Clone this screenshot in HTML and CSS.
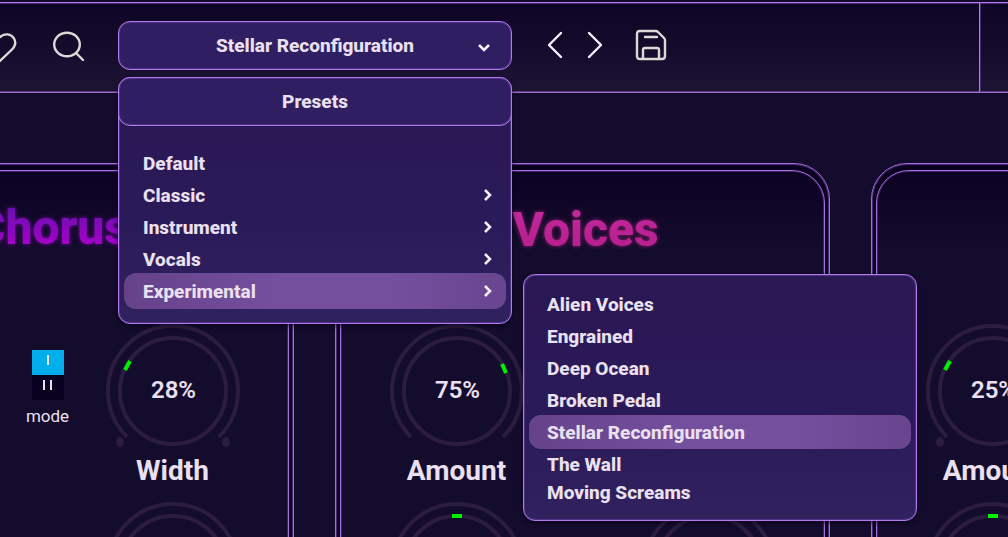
FILE: index.html
```html
<!DOCTYPE html>
<html lang="en">
<head>
    <meta charset="UTF-8">
    <meta name="viewport" content="width=device-width, initial-scale=1.0">
    <title>Vocal Effects</title>
    <link rel="stylesheet" href="styles.css">
</head>
<body>
    <!-- shared icons -->
    <svg class="sprite" aria-hidden="true">
        <symbol id="dial" viewBox="0 0 134 134">
            <path d="M21 113 A65 65 0 1 1 113 113" />
            <circle cx="67" cy="67" r="53" />
        </symbol>
        <symbol id="chevron" viewBox="0 0 8 12">
            <path d="M1 1 L6 6 L1 11" />
        </symbol>
    </svg>

    <header class="toolbar">
        <div class="tools">
            <button class="icon-btn heart" aria-label="Favourites">
                <svg width="32" height="32" viewBox="0 0 32 32"><path d="M16 32 L28 20.5 C31.5 17 32 13 30 9.5 C27 4.5 20.5 4 16 8 C11.5 4 5 4.5 2 9.5 C0 13 0.5 17 4 20.5 Z" /></svg>
            </button>
            <button class="icon-btn search" aria-label="Search">
                <svg width="32" height="32" viewBox="0 0 32 32"><ellipse cx="14" cy="15.5" rx="12.8" ry="11.8" /><path d="M23 24 L30 31" /></svg>
            </button>

            <div class="preset">
                <select class="preset-select" aria-label="Preset">
                    <option>Stellar Reconfiguration</option>
                    <option>Default</option>
                </select>
                <svg class="preset-arrow" width="12" height="8" viewBox="0 0 12 8"><path d="M1 1 L6 6 L11 1" /></svg>

                <div class="menu">
                    <h2>Presets</h2>
                    <ul>
                        <li><button>Default</button></li>
                        <li><button>Classic <svg><use href="#chevron" /></svg></button></li>
                        <li><button>Instrument <svg><use href="#chevron" /></svg></button></li>
                        <li><button>Vocals <svg><use href="#chevron" /></svg></button></li>
                        <li><button class="active">Experimental <svg><use href="#chevron" /></svg></button></li>
                    </ul>
                </div>

                <div class="menu submenu">
                    <ul>
                        <li><button>Alien Voices</button></li>
                        <li><button>Engrained</button></li>
                        <li><button>Deep Ocean</button></li>
                        <li><button>Broken Pedal</button></li>
                        <li><button class="active">Stellar Reconfiguration</button></li>
                        <li><button>The Wall</button></li>
                        <li><button>Moving Screams</button></li>
                    </ul>
                </div>
            </div>

            <div class="nav">
                <button class="icon-btn bright" aria-label="Previous preset">
                    <svg width="16" height="26" viewBox="0 0 16 26"><path d="M14 1 L2 13 L14 25" /></svg>
                </button>
                <button class="icon-btn bright" aria-label="Next preset">
                    <svg width="16" height="26" viewBox="0 0 16 26"><path d="M2 1 L14 13 L2 25" /></svg>
                </button>
            </div>
            <button class="icon-btn" aria-label="Save">
                <svg width="32" height="32" viewBox="0 0 32 32"><path d="M5 2 H21 Q22 2 23 3 L29 9 Q30 10 30 11 V27 Q30 30 27 30 H5 Q2 30 2 27 V5 Q2 2 5 2 Z M8 30 V21 Q8 19 10 19 H22 Q24 19 24 21 V30 M10 8 H22" /></svg>
            </button>
        </div>
        <div class="extra"></div>
    </header>

    <main class="panels">
        <section class="panel">
            <div class="panel-inner">
                <h1 class="chorus">Chorus</h1>
                <div class="knobs">
                    <div class="knob">
                        <svg class="dial"><use href="#dial" /></svg>
                        <span class="value">50%</span>
                        <h3>Rate</h3>
                    </div>
                    <div class="knob">
                        <svg class="dial">
                            <use href="#dial" />
                            <path class="mark" d="M19 46 L24 37" />
                            <ellipse class="stop" cx="14" cy="118" rx="4" ry="5" />
                            <ellipse class="stop" cx="120" cy="118" rx="4" ry="5" />
                        </svg>
                        <span class="value">28%</span>
                        <h3>Width</h3>
                    </div>
                    <div class="mode">
                        <div class="mode-switch">
                            <button class="on" aria-label="Mode 1"><i></i></button>
                            <button aria-label="Mode 2"><i></i><i></i></button>
                        </div>
                        <span>mode</span>
                    </div>
                    <div class="knob">
                        <svg class="dial"><use href="#dial" /></svg>
                    </div>
                    <div class="knob">
                        <svg class="dial"><use href="#dial" /></svg>
                    </div>
                </div>
            </div>
        </section>

        <section class="panel">
            <div class="panel-inner">
                <h1 class="voices">Voices</h1>
                <div class="knobs">
                    <div class="knob">
                        <svg class="dial"><use href="#dial" /><path class="mark" d="M112 40 L116 49" /></svg>
                        <span class="value">75%</span>
                        <h3>Amount</h3>
                    </div>
                    <div class="knob">
                        <svg class="dial"><use href="#dial" /></svg>
                        <h3>Spread</h3>
                    </div>
                    <div class="knob">
                        <svg class="dial"><use href="#dial" /><path class="mark" d="M62 14 H72" /></svg>
                    </div>
                    <div class="knob">
                        <svg class="dial"><use href="#dial" /></svg>
                    </div>
                </div>
            </div>
        </section>

        <section class="panel">
            <div class="panel-inner">
                <h1 class="voices">Delay</h1>
                <div class="knobs">
                    <div class="knob">
                        <svg class="dial">
                            <use href="#dial" />
                            <path class="mark" d="M19 46 L24 37" />
                            <ellipse class="stop" cx="14" cy="118" rx="4" ry="5" />
                            <ellipse class="stop" cx="120" cy="118" rx="4" ry="5" />
                        </svg>
                        <span class="value">25%</span>
                        <h3>Amount</h3>
                    </div>
                    <div class="knob"></div>
                    <div class="knob">
                        <svg class="dial"><use href="#dial" /><path class="mark" d="M62 14 H72" /></svg>
                    </div>
                </div>
            </div>
        </section>
    </main>
</body>
</html>
```

FILE: styles.css
```css
* {
    box-sizing: border-box;
}
body {
    margin: 0;
    padding-top: 2px;
    height: 100vh;
    overflow: hidden;
    background: #140c2c;
    color: #eae0f0;
    font-family: Roboto, "Open Sans", sans-serif;
}
button {
    padding: 0;
    border: 0;
    background: none;
    color: inherit;
    font: inherit;
    cursor: pointer;
}
h1, h2, h3, ul {
    margin: 0;
    padding: 0;
}
ul {
    list-style: none;
}
svg {
    display: block;
    fill: none;
    overflow: visible;
}
.sprite {
    display: none;
}

/* top bar */
.toolbar {
    display: flex;
    height: 91px;
    border-top: 1px solid #b478ee;
    border-bottom: 1px solid #a068d4;
    background: linear-gradient(#0f0526, #150d2d 60%, #1e1535);
    box-shadow: inset 0 1px #4a2a72, inset 0 -1px #5d3f80;
}
.tools {
    flex: 1;
    display: flex;
    align-items: flex-start;
    padding-top: 18px;
}
.extra {
    width: 29px;
    border-left: 1px solid #b478ee;
    box-shadow: inset 1px 0 #4a2a72;
}
.icon-btn {
    height: 48px;
    display: flex;
    align-items: center;
    stroke: #dcdad8;
    stroke-width: 2.4;
    stroke-linecap: round;
    stroke-linejoin: round;
}
.icon-btn.bright {
    stroke: #fbeeff;
}
.heart {
    margin-left: -16px;
}
.search {
    margin-left: 37px;
    margin-right: 33px;
}
.nav {
    display: flex;
    gap: 24px;
    margin: 0 32px 0 35px;
}

/* preset drop-down */
.preset {
    position: relative;
    width: 394px;
}
.preset-select {
    display: block;
    width: 100%;
    height: 49px;
    padding: 0 24px;
    appearance: none;
    border: 1px solid #b478ee;
    border-radius: 12px;
    background: #2f1e61;
    box-shadow: inset 0 0 0 1px #4f3285;
    color: inherit;
    font: 800 19px Roboto, sans-serif;
    text-align: center;
    text-align-last: center;
}
.preset-arrow {
    position: absolute;
    right: 22px;
    top: 23px;
    stroke: #fbeeff;
    stroke-width: 2.5;
}
.menu {
    position: absolute;
    z-index: 2;
    top: 56px;
    left: 0;
    width: 394px;
    height: 247px;
    border: 1px solid #b478ee;
    border-radius: 12px;
    background: linear-gradient(#291853, #2b1a59 60%, #30225e);
    font-size: 19px;
    font-weight: 800;
    box-shadow: inset 0 0 0 1px #4f3285, 0 2px 5px rgba(5, 0, 20, 0.6);
}
.menu h2 {
    height: 49px;
    margin: -1px;
    border: 1px solid #b478ee;
    border-radius: 12px;
    background: #2f1e61;
    box-shadow: inset 0 0 0 1px #4f3285;
    font-size: 19px;
    font-weight: 800;
    line-height: 47px;
    text-align: center;
}
.menu ul {
    padding: 20px 5px 0;
}
.menu li {
    height: 32px;
}
.menu li button {
    display: flex;
    align-items: center;
    justify-content: space-between;
    width: 100%;
    height: 36px;
    padding: 0 14px 0 19px;
    border-radius: 12px;
}
.menu li .active {
    background: linear-gradient(90deg, #66428a, #744f9e 40%, #744f9e 70%, #68458e);
}
.menu li svg {
    width: 8px;
    height: 12px;
    stroke: #fbeeff;
    stroke-width: 2.5;
}
.submenu {
    top: 253px;
    left: 405px;
}
.submenu ul {
    padding-top: 12px;
}
.submenu li button {
    height: 34px;
    padding-left: 18px;
}
.submenu li:last-child {
    margin-top: -4px;
}

/* effect panels */
.panels {
    display: grid;
    grid-template-columns: repeat(3, minmax(495px, 1fr));
    gap: 41px;
    margin: 70px 0 0 -201px;
}
.panel {
    padding: 6px 4px;
    border: 1px solid #a66ee0;
    border-radius: 36px;
    background: #0a0020;
    box-shadow: inset 0 0 0 1px #4a2a72;
}
.panel-inner {
    height: 560px;
    padding-top: 25px;
    border: 1px solid #a66ee0;
    border-radius: 33px;
    background: linear-gradient(#0c0224, #140c2c 80px);
    box-shadow: inset 0 0 0 1px #3c2260;
}
.panel h1 {
    height: 68px;
    padding-left: 6px;
    font-size: 48px;
    font-weight: 800;
    line-height: 68px;
    text-align: center;
    -webkit-background-clip: text;
    background-clip: text;
    color: transparent;
}
.panel .chorus {
    padding-left: 10px;
    line-height: 64px;
    background-image: linear-gradient(#6a10b0 20%, #a800c8 75%);
    filter: drop-shadow(0 0 2px #7008a0);
}
.voices {
    background-image: linear-gradient(#c0289c 20%, #b82090 75%);
    filter: drop-shadow(0 0 2px #90206c);
}
.knobs {
    position: relative;
    display: grid;
    grid-template-columns: repeat(2, 134px);
    column-gap: 118px;
    justify-content: center;
    margin-top: 60px;
}
.knob {
    position: relative;
    height: 178px;
    text-align: center;
}
.dial {
    width: 134px;
    height: 134px;
    stroke: #2b1c40;
    stroke-width: 4;
}
.mark {
    stroke: #00f000;
}
.stop {
    fill: #2b1c40;
    stroke: none;
}
.value {
    position: absolute;
    top: 50px;
    left: 1px;
    width: 100%;
    font-size: 24px;
    font-weight: 600;
    line-height: 32px;
}
.knob h3 {
    margin-top: -3px;
    font-size: 28px;
    font-weight: 700;
    line-height: 32px;
}
.mode {
    position: absolute;
    top: 26px;
    left: 50%;
    width: 60px;
    margin-left: -29px;
    font-size: 17px;
    text-align: center;
}
.mode-switch {
    width: 32px;
    margin: 0 auto 6px;
    background: #0a0020;
}
.mode-switch button {
    display: flex;
    justify-content: center;
    gap: 5px;
    width: 32px;
    height: 25px;
    padding-top: 5px;
}
.mode-switch .on {
    background: #00aeec;
}
.mode-switch i {
    width: 2px;
    height: 10px;
    background: #eae0f0;
}
```
